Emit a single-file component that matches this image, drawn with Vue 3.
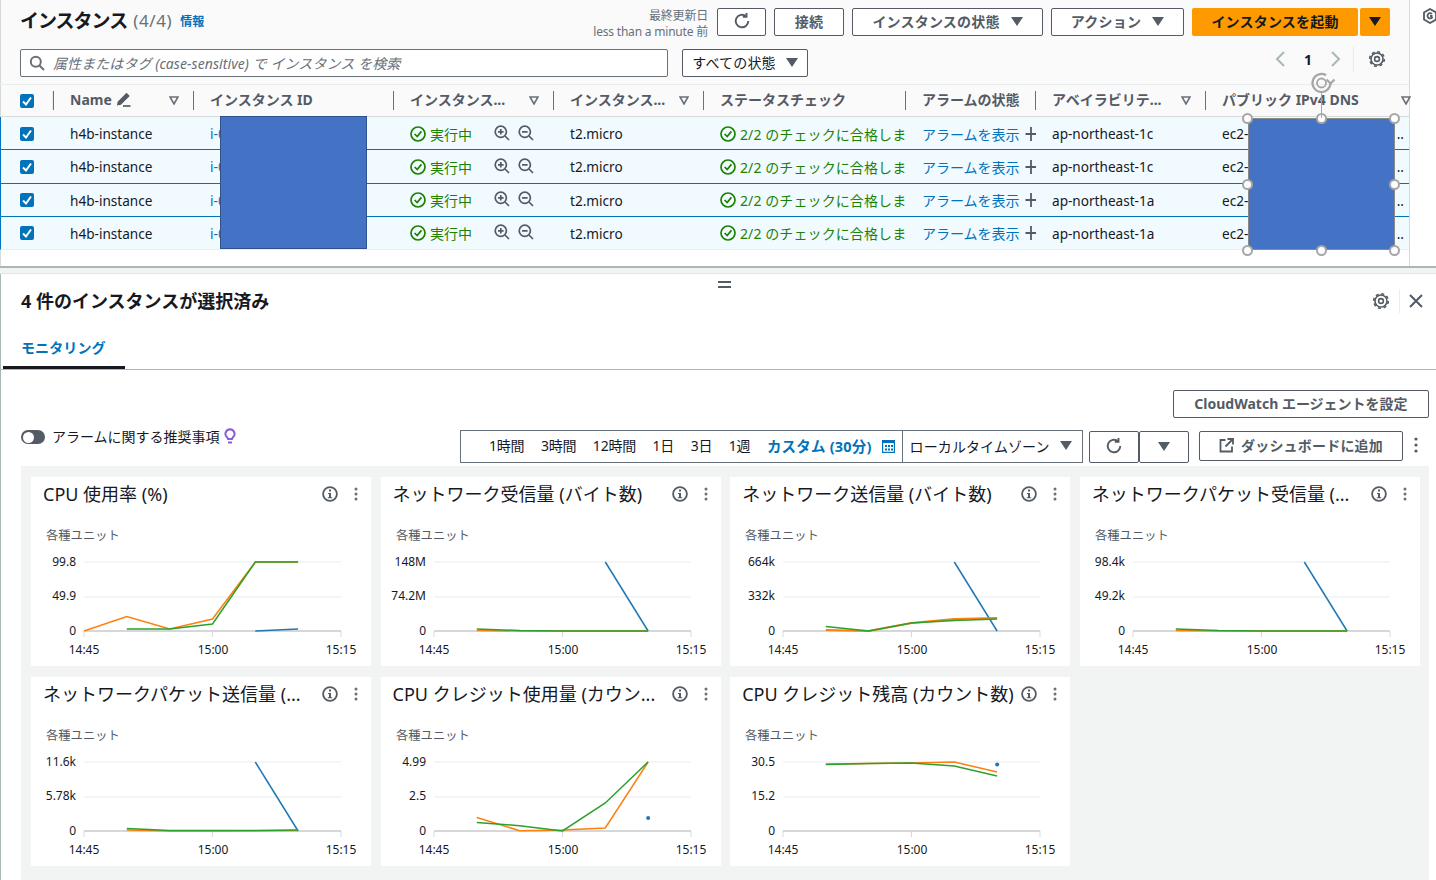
<script setup>
const columns = [
  { label: 'Name', edit: true, filter: true, w: 140 },
  { label: 'インスタンス ID', w: 200 },
  { label: 'インスタンス...', filter: true, w: 160 },
  { label: 'インスタンス...', filter: true, w: 150 },
  { label: 'ステータスチェック', w: 202 },
  { label: 'アラームの状態', w: 130 },
  { label: 'アベイラビリテ...', filter: true, w: 170 },
  { label: 'パブリック IPv4 DNS', filter: true, w: 205 },
]
const gridCols = '53px ' + columns.map((c) => c.w + 'px').join(' ')
const rows = ['ap-northeast-1c', 'ap-northeast-1c', 'ap-northeast-1a', 'ap-northeast-1a']
const ranges = ['1時間', '3時間', '12時間', '1日', '3日', '1週']

const X0 = 53
const STEP = 42.83
const BLUE = '#1f77b4'
const ORANGE = '#ff7f0e'
const GREEN = '#2ca02c'
const pts = (arr) => arr.map(([i, y]) => `${(X0 + i * STEP).toFixed(1)},${y}`).join(' ')

const charts = [
  {
    title: 'CPU 使用率 (%)', y: ['99.8', '49.9', '0'],
    lines: [
      { c: BLUE, w: 1.5, p: [[4, 154], [5, 152]] },
      { c: ORANGE, w: 1.5, p: [[0, 154], [1, 139.5], [2, 152], [3, 142], [4, 85], [5, 85]] },
      { c: GREEN, w: 1.5, p: [[1, 152], [2, 152], [3, 147], [4, 85], [5, 85]] },
    ],
  },
  {
    title: 'ネットワーク受信量 (バイト数)', y: ['148M', '74.2M', '0'],
    lines: [
      { c: BLUE, w: 1.5, p: [[4, 85], [5, 154]] },
      { c: ORANGE, w: 1.5, p: [[1, 153.5], [2, 154], [3, 154], [4, 154], [5, 154]] },
      { c: GREEN, w: 1.5, p: [[1, 152], [2, 153.5], [3, 154], [4, 154], [5, 154]] },
    ],
  },
  {
    title: 'ネットワーク送信量 (バイト数)', y: ['664k', '332k', '0'],
    lines: [
      { c: BLUE, w: 1.5, p: [[4, 85], [5, 154]] },
      { c: ORANGE, w: 2, p: [[1, 153], [2, 154], [3, 146], [4, 142], [5, 141]] },
      { c: GREEN, w: 1.5, p: [[1, 149.5], [2, 154], [3, 146], [4, 143.5], [5, 142]] },
    ],
  },
  {
    title: 'ネットワークパケット受信量 (...', y: ['98.4k', '49.2k', '0'],
    lines: [
      { c: BLUE, w: 1.5, p: [[4, 85], [5, 154]] },
      { c: ORANGE, w: 1.5, p: [[1, 153.5], [2, 154], [3, 154], [4, 154], [5, 154]] },
      { c: GREEN, w: 1.5, p: [[1, 152], [2, 153.5], [3, 154], [4, 154], [5, 154]] },
    ],
  },
  {
    title: 'ネットワークパケット送信量 (...', y: ['11.6k', '5.78k', '0'],
    lines: [
      { c: BLUE, w: 1.5, p: [[4, 85], [5, 154]] },
      { c: ORANGE, w: 1.5, p: [[1, 153], [2, 154], [3, 154], [4, 153.8], [5, 153.5]] },
      { c: GREEN, w: 1.5, p: [[1, 151.5], [2, 153.5], [3, 153.5], [4, 153.5], [5, 153]] },
    ],
  },
  {
    title: 'CPU クレジット使用量 (カウン...', y: ['4.99', '2.5', '0'], dot: [5, 141],
    lines: [
      { c: ORANGE, w: 1.5, p: [[1, 140.5], [2, 153.7], [3, 153], [4, 151], [5, 85]] },
      { c: GREEN, w: 1.5, p: [[1, 145.5], [2, 148.7], [3, 154], [4, 126], [5, 85]] },
    ],
  },
  {
    title: 'CPU クレジット残高 (カウント数)', y: ['30.5', '15.2', '0'], dot: [5, 87.5],
    lines: [
      { c: ORANGE, w: 1.5, p: [[1, 87], [3, 86], [4, 85], [5, 95]] },
      { c: GREEN, w: 1.5, p: [[1, 87.5], [2, 86.5], [3, 86], [4, 89], [5, 99]] },
    ],
  },
]
const handles = [
  [1247.5, 118], [1321.5, 118], [1394.5, 118],
  [1247.5, 184], [1394.5, 184],
  [1247.5, 250], [1321.5, 250], [1394.5, 250],
]
</script>

<template>
  <div class="page">
    <section class="top">
      <header class="title-row">
        <h1>インスタンス</h1>
        <span class="count">(4/4)</span>
        <a class="info">情報</a>
        <div class="updated">
          <div>最終更新日</div>
          <div>less than a minute 前</div>
        </div>
        <button class="btn refresh">
          <svg width="18" height="18" viewBox="0 0 16 16" fill="none" stroke="#545b64" stroke-width="1.7"><path d="M13.6 8a5.6 5.6 0 1 1-2-4.3" /><path d="M12 .8v3.4H8.7" /></svg>
        </button>
        <button class="btn connect">接続</button>
        <button class="btn state">インスタンスの状態
          <svg class="caret" width="12" height="9" viewBox="0 0 12 9"><polygon points="0,0 12,0 6,9" /></svg>
        </button>
        <button class="btn action">アクション
          <svg class="caret" width="12" height="9" viewBox="0 0 12 9"><polygon points="0,0 12,0 6,9" /></svg>
        </button>
        <button class="btn launch">インスタンスを起動</button>
        <button class="btn launch-more">
          <svg width="12" height="9" viewBox="0 0 12 9"><polygon points="0,0 12,0 6,9" fill="#16191f" /></svg>
        </button>
      </header>

      <div class="search-row">
        <div class="search">
          <svg width="16" height="16" viewBox="0 0 16 16" fill="none" stroke="#687078" stroke-width="2"><circle cx="6.8" cy="6.8" r="5" /><path d="M10.5 10.5 15 15" /></svg>
          <span>属性またはタグ (case-sensitive) で インスタンス を検索</span>
        </div>
        <button class="btn filter">すべての状態
          <svg class="caret" width="12" height="9" viewBox="0 0 12 9"><polygon points="0,0 12,0 6,9" /></svg>
        </button>
        <div class="pager">
          <svg width="12" height="18" viewBox="0 0 12 18" fill="none" stroke="#aab7b8" stroke-width="2"><path d="M10 2 3 9l7 7" /></svg>
          <b>1</b>
          <svg width="12" height="18" viewBox="0 0 12 18" fill="none" stroke="#aab7b8" stroke-width="2"><path d="M2 2l7 7-7 7" /></svg>
          <i class="pager-sep"></i>
          <svg width="18" height="18" viewBox="0 0 18 18" fill="none" stroke="#545b64"><circle cx="9" cy="9" r="2.4" stroke-width="1.6" /><circle cx="9" cy="9" r="6" stroke-width="1.6" /><circle cx="9" cy="9" r="7.3" stroke-width="1.6" stroke-dasharray="3 2.73" /></svg>
        </div>
      </div>

      <div class="table">
        <div class="thead" :style="{ gridTemplateColumns: gridCols }">
          <div class="th-check"><span class="check"><svg width="14" height="14" viewBox="0 0 14 14" fill="none" stroke="#fff" stroke-width="2"><path d="M3 7.5 6 10.5 11 3.5" /></svg></span></div>
          <div v-for="(c, i) in columns" :key="i" class="th">
            <span class="th-label">{{ c.label }}</span>
            <svg v-if="c.edit" class="pencil" width="15" height="15" viewBox="0 0 15 15" fill="none" stroke="#545b64" stroke-width="1.7"><path d="M2.5 10 10.5 2l2 2-8 8-2.5.5z" fill="#545b64" /><path d="M7 14h7.5" /></svg>
            <svg v-if="c.filter" class="th-filter" width="10" height="9" viewBox="0 0 10 9" fill="none" stroke="#687078" stroke-width="1.6"><polygon points="1,1 9,1 5,8" /></svg>
          </div>
        </div>
        <div v-for="(az, r) in rows" :key="r" class="tr" :style="{ gridTemplateColumns: gridCols }">
          <div class="td-check"><span class="check"><svg width="14" height="14" viewBox="0 0 14 14" fill="none" stroke="#fff" stroke-width="2"><path d="M3 7.5 6 10.5 11 3.5" /></svg></span></div>
          <div class="td">h4b-instance</div>
          <div class="td link">i-0</div>
          <div class="td ok">
            <svg class="ok-icon" width="16" height="16" viewBox="0 0 16 16" fill="none" stroke="#1d8102" stroke-width="1.7"><circle cx="8" cy="8" r="7" /><path d="M4.6 8 7.2 10.6 11.4 5.4" /></svg>
            <span>実行中</span>
            <svg class="mag first" width="16" height="16" viewBox="0 0 16 16" fill="none" stroke="#545b64" stroke-width="1.7"><circle cx="6.8" cy="6.8" r="5.6" /><path d="M11 11l4 4M4 6.8h5.6M6.8 4v5.6" /></svg>
            <svg class="mag" width="16" height="16" viewBox="0 0 16 16" fill="none" stroke="#545b64" stroke-width="1.7"><circle cx="6.8" cy="6.8" r="5.6" /><path d="M11 11l4 4M4 6.8h5.6" /></svg>
          </div>
          <div class="td">t2.micro</div>
          <div class="td ok">
            <svg class="ok-icon" width="16" height="16" viewBox="0 0 16 16" fill="none" stroke="#1d8102" stroke-width="1.7"><circle cx="8" cy="8" r="7" /><path d="M4.6 8 7.2 10.6 11.4 5.4" /></svg>
            <span class="status-text">2/2 のチェックに合格しま</span>
          </div>
          <div class="td link alarm">
            <span>アラームを表示</span>
            <svg width="11" height="16" viewBox="0 0 11 16" fill="none" stroke="#545b64" stroke-width="1.8"><path d="M6 1v14M0.5 8h10.5" /></svg>
          </div>
          <div class="td">{{ az }}</div>
          <div class="td dns"><span>ec2-</span><span class="dots">..</span></div>
        </div>
      </div>
    </section>

    <div class="splitter"></div>

    <section class="bottom">
      <svg class="grip" width="14" height="7" viewBox="0 0 14 7" fill="#545b64"><rect width="13" height="2" /><rect y="5" width="13" height="2" /></svg>
      <div class="sel-row">
        <h2>4 件のインスタンスが選択済み</h2>
        <svg width="18" height="18" viewBox="0 0 18 18" fill="none" stroke="#545b64"><circle cx="9" cy="9" r="2.4" stroke-width="1.6" /><circle cx="9" cy="9" r="6" stroke-width="1.6" /><circle cx="9" cy="9" r="7.3" stroke-width="1.6" stroke-dasharray="3 2.73" /></svg>
        <i class="sel-sep"></i>
        <svg width="14" height="14" viewBox="0 0 14 14" fill="none" stroke="#545b64" stroke-width="2"><path d="M1 1l12 12M13 1 1 13" /></svg>
      </div>
      <div class="tabs"><div class="tab">モニタリング</div></div>

      <div class="agent-row"><button class="btn agent">CloudWatch エージェントを設定</button></div>

      <div class="controls">
        <span class="toggle"><i></i></span>
        <span class="toggle-label">アラームに関する推奨事項</span>
        <svg class="bulb" width="12" height="16" viewBox="0 0 12 16" fill="none" stroke="#8a5cd6" stroke-width="2"><path d="M6 1.2a4.6 4.6 0 0 1 2.8 8.2L8 11H4l-.8-1.6A4.6 4.6 0 0 1 6 1.2z" /><path d="M4 14.5h4" /></svg>
        <div class="range">
          <span v-for="t in ranges" :key="t" class="range-item">{{ t }}</span>
          <b class="custom">カスタム (30分)</b>
          <svg class="cal" width="13" height="13" viewBox="0 0 13 13"><rect x="0.5" y="0.5" width="12" height="12" fill="none" stroke="#0073bb" stroke-width="1.4" /><rect y="0" width="13" height="3" fill="#0073bb" /><g fill="#0073bb"><rect x="3" y="5" width="2" height="2" /><rect x="6" y="5" width="2" height="2" /><rect x="9" y="5" width="2" height="2" /><rect x="3" y="8.5" width="2" height="2" /><rect x="6" y="8.5" width="2" height="2" /><rect x="9" y="8.5" width="2" height="2" /></g></svg>
          <span class="tz">ローカルタイムゾーン
            <svg class="caret" width="12" height="9" viewBox="0 0 12 9"><polygon points="0,0 12,0 6,9" /></svg>
          </span>
        </div>
        <button class="btn c-refresh">
          <svg width="18" height="18" viewBox="0 0 16 16" fill="none" stroke="#545b64" stroke-width="1.7"><path d="M13.6 8a5.6 5.6 0 1 1-2-4.3" /><path d="M12 .8v3.4H8.7" /></svg>
        </button>
        <button class="btn c-more">
          <svg class="caret" width="12" height="9" viewBox="0 0 12 9"><polygon points="0,0 12,0 6,9" /></svg>
        </button>
        <button class="btn dash">
          <svg width="15" height="15" viewBox="0 0 15 15" fill="none" stroke="#545b64" stroke-width="1.8"><path d="M6.5 2H1.5v11.5H13V8.5" /><path d="M8.5 1H14v5.5M14 1 6.5 8.5" /></svg>
          ダッシュボードに追加
        </button>
        <svg class="kebab" width="4" height="16" viewBox="0 0 4 16" fill="#545b64"><circle cx="2" cy="2" r="1.6" /><circle cx="2" cy="8" r="1.6" /><circle cx="2" cy="14" r="1.6" /></svg>
      </div>

      <div class="grid">
        <article v-for="(ch, i) in charts" :key="i" class="card">
          <div class="card-head">
            <span class="card-title">{{ ch.title }}</span>
            <svg class="card-info" width="16" height="16" viewBox="0 0 16 16"><circle cx="8" cy="8" r="6.9" fill="none" stroke="#545b64" stroke-width="1.8" /><rect x="7" y="3.5" width="2" height="2" fill="#545b64" /><path d="M6 7h3v4.2h1.2v1H5.8v-1H7V8H6z" fill="#545b64" /></svg>
            <svg class="kebab-s" width="4" height="16" viewBox="0 0 4 16" fill="#687078"><circle cx="2" cy="3" r="1.5" /><circle cx="2" cy="8" r="1.5" /><circle cx="2" cy="13" r="1.5" /></svg>
          </div>
          <svg class="plot" width="340" height="189" viewBox="0 0 340 189">
            <text x="15" y="63" class="unit">各種ユニット</text>
            <line x1="53" x2="310" y1="85" y2="85" stroke="#e9ebed" />
            <line x1="53" x2="310" y1="120" y2="120" stroke="#e9ebed" />
            <line x1="53" x2="310" y1="154" y2="154" stroke="#c8cacc" stroke-width="1.5" />
            <line x1="53" x2="53" y1="154" y2="160" stroke="#d5dbdb" />
            <line x1="181.5" x2="181.5" y1="154" y2="160" stroke="#d5dbdb" />
            <line x1="310" x2="310" y1="154" y2="160" stroke="#d5dbdb" />
            <text x="45" y="89" class="tick" text-anchor="end">{{ ch.y[0] }}</text>
            <text x="45" y="123" class="tick" text-anchor="end">{{ ch.y[1] }}</text>
            <text x="45" y="158" class="tick" text-anchor="end">{{ ch.y[2] }}</text>
            <text x="53" y="177" class="tick" text-anchor="middle">14:45</text>
            <text x="182" y="177" class="tick" text-anchor="middle">15:00</text>
            <text x="310" y="177" class="tick" text-anchor="middle">15:15</text>
            <polyline v-for="(l, k) in ch.lines" :key="k" :points="pts(l.p)" fill="none" :stroke="l.c" :stroke-width="l.w" />
            <circle v-if="ch.dot" :cx="X0 + ch.dot[0] * STEP" :cy="ch.dot[1]" r="2" :fill="BLUE" />
          </svg>
        </article>
      </div>
    </section>

    <svg class="side-icon" width="14" height="16" viewBox="0 0 14 16" fill="none" stroke="#545b64" stroke-width="1.8"><path d="M7 1l6 3.4v7.2L7 15l-6-3.4V4.4z" /><path d="M9.5 8h-2.5M9 6a2.6 2.6 0 1 0 .4 3" /></svg>
    <div class="mask mask-a"></div>
    <div class="mask mask-b"></div>
    <span v-for="(h, i) in handles" :key="i" class="handle" :style="{ left: h[0] + 'px', top: h[1] + 'px' }"></span>
    <i class="rot-line"></i>
    <svg class="rot" width="28" height="24" viewBox="0 0 28 24" fill="none" stroke="#a6a6a6" stroke-width="2.2"><path d="M20.5 12A9 9 0 1 1 16 4.2" /><circle cx="11.5" cy="12" r="4.5" stroke-width="1.8" /><path d="M16.5 8.5l4 4 4-4" /></svg>
  </div>
</template>

<style scoped>
.page {
  position: relative;
  width: 1436px;
  height: 880px;
  overflow: hidden;
  background: #fff;
  color: #16191f;
  font-family: "Noto Sans", "Noto Sans CJK JP", sans-serif;
  font-size: 14px;
}
button { font-family: inherit; }
.top {
  width: 1410px;
  height: 266px;
  box-sizing: border-box;
  background: linear-gradient(#fafafa 0, #fafafa 250px, #fff 250px);
  border-right: 1px solid #d5dbdb;
  border-left: 1px solid #d5dbdb;
  display: flex;
  flex-direction: column;
}
.title-row {
  height: 44px;
  display: flex;
  align-items: center;
  padding-left: 19px;
  box-sizing: border-box;
}
h1 {
  margin: 0 0 4px;
  font-size: 19px;
  font-weight: 700;
  letter-spacing: -1px;
}
.count { margin: 0 0 3px 6px; font-size: 17px; letter-spacing: 0.6px; color: #687078; }
.info { margin: 0 0 2px 8px; font-size: 12px; font-weight: 700; color: #0073bb; }
.updated {
  margin-left: auto;
  margin-top: 4px;
  text-align: right;
  font-size: 12px;
  line-height: 16px;
  letter-spacing: -0.2px;
  color: #687078;
  margin-right: 9px;
  white-space: nowrap;
}
.btn {
  box-sizing: border-box;
  height: 28px;
  background: #fff;
  border: 1px solid #545b64;
  border-radius: 2px;
  color: #545b64;
  font-size: 14px;
  font-weight: 700;
  letter-spacing: 0.2px;
  display: inline-flex;
  align-items: center;
  justify-content: center;
  padding: 0 0 2px;
  white-space: nowrap;
}
.caret { fill: #545b64; }
.refresh { width: 49px; margin-right: 8px; }
.connect { width: 70px; margin-right: 8px; }
.state { width: 191px; margin-right: 8px; gap: 11px; }
.action { width: 133px; margin-right: 8px; gap: 11px; }
.launch {
  width: 166px;
  background: #ff9900;
  border: none;
  color: #16191f;
}
.launch-more {
  width: 30px;
  margin-left: 2px;
  margin-right: 19px;
  background: #ff9900;
  border: none;
}
.search-row {
  height: 28px;
  margin-top: 5px;
  display: flex;
  align-items: center;
  padding-left: 19px;
}
.search {
  box-sizing: border-box;
  width: 648px;
  height: 28px;
  border: 1px solid #687078;
  border-radius: 2px;
  background: #fff;
  display: flex;
  align-items: center;
  padding-left: 8px;
  gap: 8px;
  color: #687078;
  font-style: italic;
  font-size: 14px;
  letter-spacing: 0.08px;
}
.filter {
  width: 126px;
  margin-left: 14px;
  gap: 10px;
  font-weight: 400;
  color: #16191f;
}
.pager {
  margin-left: auto;
  margin-top: -8px;
  display: flex;
  align-items: center;
  padding-right: 23px;
}
.pager b { width: 44px; text-align: center; font-size: 14px; }
.pager-sep { width: 1px; height: 26px; margin: 0 14px 0 11px; background: #eaeded; }
.table { margin-top: 7px; }
.thead {
  display: grid;
  height: 33px;
  margin-left: -1px;
  border-top: 1px solid #eaeded;
  border-bottom: 1px solid #d5dbdb;
  box-sizing: border-box;
}
.th-check, .td-check {
  display: flex;
  align-items: center;
  padding-left: 20px;
}
.td-check { padding-left: 19px; padding-top: 1px; }
.th-check { position: relative; }
.th-check::after {
  content: "";
  position: absolute;
  right: 0;
  top: 6px;
  bottom: 6px;
  width: 1px;
  background: #eaeded;
}
.check {
  width: 14px;
  height: 14px;
  border-radius: 2px;
  background: #0073bb;
  display: block;
  line-height: 0;
}
.th {
  position: relative;
  display: flex;
  align-items: center;
  padding-left: 17px;
  padding-bottom: 3px;
  font-size: 14px;
  font-weight: 700;
  color: #545b64;
  white-space: nowrap;
}
.th::before {
  content: "";
  position: absolute;
  left: 0;
  top: 6px;
  bottom: 6px;
  width: 1px;
  background: #687078;
}
.pencil { margin-left: 4px; }
.th-filter { position: absolute; right: 14px; top: 11px; }
.th:last-child .th-filter { right: -1px; top: 11px; }
.tr {
  display: grid;
  height: 33.25px;
  box-sizing: border-box;
  margin-left: -1px;
  background: #f1faff;
  border-bottom: 1px solid #0073bb;
  border-left: 1px solid #0073bb;
  font-size: 13.6px;
}
.tr:last-child { border-bottom: 1px solid #eaeded; }
.td {
  display: flex;
  align-items: center;
  padding-left: 16px;
  padding-top: 1px;
  overflow: hidden;
  white-space: nowrap;
  min-width: 0;
}
.link { color: #0073bb; }
.ok { color: #1d8102; font-size: 14px; }
.ok-icon { flex: none; margin-right: 4px; }
.status-text { flex: none; letter-spacing: 0.1px; }
.mag { position: relative; top: -1px; margin-left: 8px; flex: none; }
.mag.first { margin-left: 22px; }
.alarm { justify-content: space-between; font-size: 14px; padding-right: 0; }
.dns { justify-content: space-between; padding-right: 7px; }
.splitter {
  height: 8px;
  width: 1436px;
  box-sizing: border-box;
  background: #f2f3f3;
  border-top: 2px solid #aab7b8;
  border-bottom: 1px solid #e3e6e6;
}
.bottom {
  position: relative;
  height: 606px;
  box-sizing: border-box;
  border-left: 1px solid #aab7b8;
  padding: 7px 0 0 20px;
}
.grip { position: absolute; left: 717px; top: 7px; }
.sel-row {
  height: 40px;
  display: flex;
  align-items: center;
  padding-right: 13px;
}
h2 {
  margin: 0 auto 2px 0;
  font-size: 18px;
  font-weight: 700;
}
.sel-sep { width: 1px; height: 24px; margin: 0 9px; background: #eaeded; }
.tabs {
  height: 48px;
  margin-left: -20px;
  border-bottom: 1px solid #aab7b8;
}
.tab {
  box-sizing: border-box;
  margin-left: 2px;
  width: 122px;
  height: 48px;
  padding-left: 18px;
  padding-top: 15px;
  line-height: 24px;
  font-size: 14px;
  font-weight: 700;
  letter-spacing: 0.1px;
  color: #0073bb;
  border-bottom: 3px solid #16191f;
}
.agent-row {
  margin-top: 20px;
  display: flex;
  justify-content: flex-end;
  padding-right: 7px;
}
.agent { width: 256px; letter-spacing: 0; }
.controls {
  margin-top: 12px;
  height: 36px;
  display: flex;
  align-items: flex-start;
  padding-right: 18px;
}
.toggle {
  width: 24px;
  height: 14px;
  border-radius: 7px;
  background: #545b64;
  position: relative;
  flex: none;
}
.toggle i {
  position: absolute;
  left: 1.5px;
  top: 1.5px;
  width: 11px;
  height: 11px;
  border-radius: 50%;
  background: #fff;
}
.toggle-label {
  margin-left: 7px;
  font-size: 14px;
  line-height: 14px;
  white-space: nowrap;
}
.bulb { margin-left: 4px; margin-top: -2px; flex: none; }
.range {
  box-sizing: border-box;
  margin-left: auto;
  width: 623px;
  height: 33px;
  border: 1px solid #687078;
  display: flex;
  align-items: center;
  padding: 0 0 0 28px;
  font-size: 14px;
  white-space: nowrap;
}
.range-item { margin-right: 16.5px; letter-spacing: -0.2px; line-height: 28px; height: 30px; }
.custom { color: #0073bb; font-weight: 700; font-size: 14.5px; line-height: 28px; height: 30px; letter-spacing: 0.2px; }
.cal { margin-left: 10px; flex: none; }
.tz {
  margin-left: 7px;
  height: 100%;
  border-left: 1px solid #687078;
  padding: 0 0 2px 7px;
  box-sizing: border-box;
  display: flex;
  align-items: center;
  gap: 10px;
  letter-spacing: 0.1px;
}
.c-refresh { width: 50px; height: 32px; margin: 1px 0 0 6px; }
.c-more { width: 50px; height: 32px; margin-top: 1px; }
.dash { width: 204px; height: 30px; margin: 1px 0 0 10px; gap: 7px; }
.kebab { margin-left: 11px; margin-top: 7px; flex: none; }
.grid {
  width: 1408px;
  box-sizing: border-box;
  height: 420px;
  background: #f2f3f3;
  padding: 11px 10px 0;
  display: grid;
  grid-template-columns: repeat(4, 340px);
  column-gap: 9.6px;
  row-gap: 11px;
  align-content: start;
}
.card {
  position: relative;
  width: 340px;
  height: 189px;
  background: #fff;
}
.card-head {
  position: relative;
  z-index: 1;
  display: flex;
  align-items: center;
  height: 34px;
  padding: 0 13px 0 12px;
}
.card-title {
  flex: 1;
  min-width: 0;
  font-size: 18px;
  padding-bottom: 2px;
  white-space: nowrap;
  color: #16191f;
}
.card-info { flex: none; margin-left: 8px; }
.kebab-s { flex: none; margin-left: 16px; }
.plot { position: absolute; left: 0; top: 0; }
.unit { font-size: 12.3px; fill: #545b64; }
.tick { font-size: 12px; fill: #16191f; }
.side-icon { position: absolute; left: 1423px; top: 8px; }
.mask {
  position: absolute;
  background: #4472c4;
  box-sizing: border-box;
}
.mask-a {
  left: 220px;
  top: 116px;
  width: 147px;
  height: 133px;
  border: 1px solid #2f528f;
}
.mask-b {
  left: 1247.5px;
  top: 118px;
  width: 147px;
  height: 132px;
  border: 1px solid #8a8a8a;
}
.handle {
  position: absolute;
  box-sizing: border-box;
  width: 11px;
  height: 11px;
  margin: -5.5px 0 0 -5.5px;
  border-radius: 50%;
  background: #fff;
  border: 2px solid #a6a6a6;
}
.rot-line {
  position: absolute;
  left: 1321px;
  top: 93px;
  width: 1px;
  height: 25px;
  background: #a6a6a6;
}
.rot { position: absolute; left: 1310px; top: 71px; }
</style>

<style>
html, body { margin: 0; overflow: hidden; background: #fff; }
</style>
